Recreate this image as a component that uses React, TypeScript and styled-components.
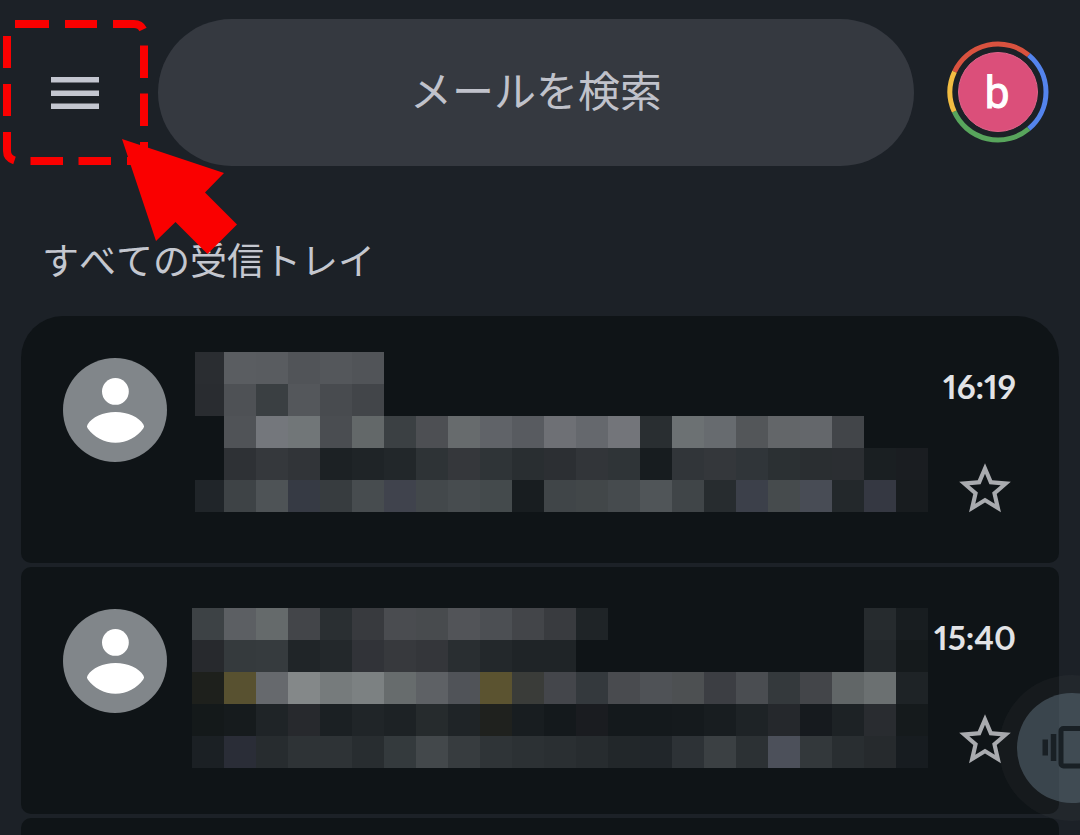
import React from "react";
import styled, { createGlobalStyle } from "styled-components";

const GlobalStyle = createGlobalStyle`
  * { box-sizing: border-box; }
  body { margin: 0; background: #1c2127; }
  button { border: 0; padding: 0; background: none; cursor: pointer; }
  svg { display: block; }
`;

const Screen = styled.div`
  position: relative;
  height: 100vh;
  overflow: hidden;
  background: #1c2127;
  color: #c4c7cf;
  font-family: "Noto Sans CJK JP", sans-serif;
  font-kerning: none;
`;

const Header = styled.header`
  display: flex;
  align-items: center;
  padding: 19px 31px 0 0;
`;

const MenuButton = styled.button`
  display: grid;
  place-items: center;
  width: 150px;
  height: 147px;
  margin-right: 8px;
`;

const SearchField = styled.input`
  flex: 1;
  min-width: 0;
  height: 147px;
  margin-right: 33px;
  padding: 0 40px 8px;
  border: 0;
  border-radius: 74px;
  outline: none;
  background: #353940;
  color: #c4c7cf;
  font-family: inherit;
  font-size: 42px;
  text-align: center;
  &::placeholder { color: #c0c2cb; opacity: 1; }
`;

const AccountButton = styled.button`
  flex: none;
  padding-bottom: 2px;
`;

const AccountLetter = styled.text`
  font-family: Roboto, sans-serif;
  font-size: 44px;
  font-weight: 400;
  fill: #ffffff;
  stroke: #ffffff;
  text-anchor: middle;
`;

const SectionTitle = styled.h1`
  margin: 69px 42px 33px;
  font-size: 37px;
  font-weight: 400;
  line-height: 48px;
`;

const MailList = styled.ul`
  display: flex;
  flex-direction: column;
  gap: 4px;
  margin: 0 21px;
  padding: 0;
  list-style: none;
`;

const MailCard = styled.li<{ $first?: boolean }>`
  display: flex;
  flex: none;
  height: 247px;
  padding: 0 43px 0 42px;
  border-radius: ${(p) => (p.$first ? "42px 42px 10px 10px" : "10px")};
  background: #0f1417;
`;

const SenderPicture = styled.div`
  flex: none;
  margin: 42px 25px 0 0;
`;

const Mosaic = styled.div<{ $top: number; $inset: number }>`
  display: grid;
  grid-template-columns: ${(p) => 32 - p.$inset}px repeat(22, 32px);
  grid-auto-rows: 32px;
  align-content: start;
  flex: none;
  padding: ${(p) => p.$top}px 0 0 ${(p) => p.$inset}px;
`;

const Tile = styled.span<{ $color: string }>`
  background: ${(p) => p.$color};
`;

const MailMeta = styled.div`
  display: flex;
  flex: 1;
  min-width: 0;
  flex-direction: column;
  align-items: flex-end;
  gap: 52px;
  padding-top: 50px;
`;

const Time = styled.time`
  color: #e2e3e6;
  font-family: Lato, sans-serif;
  font-size: 33px;
  font-weight: 700;
  font-kerning: auto;
  font-variant-numeric: proportional-nums;
  line-height: 40px;
  white-space: nowrap;
`;

const StarButton = styled.button`
  color: #a9abaf;
`;

const Callout = styled.svg`
  position: absolute;
  top: 0;
  left: 0;
  pointer-events: none;
`;

const FloatingButton = styled.button`
  position: absolute;
  top: 675px;
  right: -65px;
`;

const firstMail = [
  "2a2d31 5a5d61 595c60 515458 54575b 515458",
  "292c30 4e5155 3a3f42 54575b 484b4f 424549",
  "- 505357 74777c 717678 4a4d51 636869 3b4043 4d4f53 676b6d 606368 585b60 6e7075 65686d 73757a 292e31 6c7173 676b6f 535659 636669 64676b 424549",
  "- 2e3135 35383c 313438 1c2124 1f2427 22272a 2e3336 35373b 2f3437 292e31 2c2f33 323539 2f3437 171c1f 313539 34373b 303539 2b3033 2a2e31 2b2e32 1a1f22 1a1d21",
  "202529 3e4346 4e5356 363a44 373c3f 474c4f 40434d 43484b 474c4f 444a4c 181d20 404548 424749 464b4e 505558 404548 272c2f 3c404a 464b4d 484c55 23282b 353842 181c1f",
];

const secondMail = [
  "3d4245 5c5f63 656a6b 434549 2a2f32 383a3e 4a4c50 484b4e 525458 4c4f53 434549 393b3f 1f2427 - - - - - - - - 262b2e 181d20",
  "27292d 353a3d 363b3e 202528 23282b 313338 37393d 34363a 292e31 23282b 1f2427 1f2427 - - - - - - - - - 23282b 151a1c",
  "1e201c 585130 66696d 848889 767b7c 7c8182 676c6d 5e6165 505358 5b5330 3a3c39 44464b 34393d 494b4f 4f5256 4d5052 3c3e43 4a4d51 34393c 434549 616667 6b7071 1e2326",
  "14191a 161b1d 1f2427 27292d 1b2023 202528 1d2225 262b2d 1f2427 1f211e 181d20 14191c 1a1c20 14191c 14191c 151a1d 181d20 1e2326 25282c 161a1e 1d2225 292c30 151a1c",
  "1b2024 2a2d37 272c2f 2e3336 2e3336 282d30 343a3d 43484b 373c3f 2f3437 2c3134 2a2f32 272c2f 22272a 21262a 2d3236 3b4043 2c3134 4c505a 33383b 292e31 262a2d 171c20",
];

const COLUMNS = 23;

function HiddenText({ rows, top, inset }: { rows: string[]; top: number; inset: number }) {
  const tiles = rows.flatMap((row) => {
    const colors = row.split(" ");
    return Array.from({ length: COLUMNS }, (_, i) =>
      colors[i] && colors[i] !== "-" ? `#${colors[i]}` : "transparent"
    );
  });
  return (
    <Mosaic $top={top} $inset={inset} aria-hidden="true">
      {tiles.map((color, i) => (
        <Tile key={i} $color={color} />
      ))}
    </Mosaic>
  );
}

function PersonIcon() {
  return (
    <svg width="104" height="104" viewBox="0 0 104 104" aria-hidden="true">
      <circle cx="52" cy="52" r="52" fill="#81868a" />
      <circle cx="52.4" cy="33.4" r="13.4" fill="#fff" />
      <path
        d="M24.6 66.6C29 59 40 54 52.5 54s23.500 5 27.900 12.600q1.400 2 0 3.600C74 79 64 84.800 52.500 84.800S31 79 24.600 70.200q-1.400-1.600 0-3.600z"
        fill="#fff"
      />
    </svg>
  );
}

function StarIcon() {
  return (
    <svg width="62" height="62" viewBox="0 0 24 24" fill="currentColor" aria-hidden="true">
      <path d="M22 9.24l-7.19-.62L12 2 9.19 8.63 2 9.24l5.46 4.73L5.82 21 12 17.27 18.18 21l-1.63-7.03L22 9.24zM12 15.4l-3.76 2.27 1-4.28-3.32-2.88 4.38-.38L12 6.1l1.71 4.04 4.38.38-3.32 2.88 1 4.28L12 15.4z" />
    </svg>
  );
}

interface MailProps {
  rows: string[];
  time: string;
  top: number;
  inset?: number;
  first?: boolean;
}

function Mail({ rows, time, top, inset = 0, first }: MailProps) {
  return (
    <MailCard $first={first}>
      <SenderPicture>
        <PersonIcon />
      </SenderPicture>
      <HiddenText rows={rows} top={top} inset={inset} />
      <MailMeta>
        <Time>{time}</Time>
        <StarButton type="button" aria-label="スター">
          <StarIcon />
        </StarButton>
      </MailMeta>
    </MailCard>
  );
}

export default function App() {
  return (
    <Screen>
      <GlobalStyle />
      <Header>
        <MenuButton type="button" aria-label="メニュー">
          <svg width="48" height="32" viewBox="0 0 48 32" fill="#c3c6d0" aria-hidden="true">
            <path d="M0 0h48v5.500H0zM0 13.500h48V19H0zM0 26.500h48V32H0z" />
          </svg>
        </MenuButton>
        <SearchField type="text" placeholder="メールを検索" aria-label="メールを検索" />
        <AccountButton type="button" aria-label="アカウント">
          <svg width="102" height="102" viewBox="-51 -51 102 102">
            <g fill="none" strokeWidth="5">
              <path d="M-43.500-20.300A48 48 0 0 1 30.700-36.900" stroke="#d9523f" />
              <path d="M30.700-36.900A48 48 0 0 1 30.700 36.900" stroke="#5484ed" />
              <path d="M30.700 36.900A48 48 0 0 1-43.800 19.600" stroke="#58a55c" />
              <path d="M-43.800 19.600A48 48 0 0 1-43.500-20.300" stroke="#f2bd42" />
            </g>
            <circle r="39.500" fill="#db4f7a" stroke="#e0648a" />
            <AccountLetter x="-1" y="16">b</AccountLetter>
          </svg>
        </AccountButton>
      </Header>
      <main>
        <SectionTitle>すべての受信トレイ</SectionTitle>
        <MailList>
          <Mail first rows={firstMail} time="16:19" top={36} inset={3} />
          <Mail rows={secondMail} time="15:40" top={41} />
          <MailCard />
        </MailList>
      </main>

      <FloatingButton type="button" aria-label="バイブレーション">
        <svg width="146" height="146" viewBox="0 0 146 146" aria-hidden="true">
          <circle cx="73" cy="73" r="73" fill="#8c8c82" fillOpacity="0.06" />
          <circle cx="73" cy="73" r="55" fill="#5a6a75" fillOpacity="0.55" />
          <g fill="#192025">
            <path d="M43.500 64.500h5.500v16h-5.500zM51.800 59h5.500v27h-5.500zM97 64.500h5.500v16H97zM88.700 59h5.500v27h-5.500z" />
          </g>
          <rect x="62" y="53.500" width="22" height="37.500" rx="2.500" fill="none" stroke="#192025" strokeWidth="5" />
        </svg>
      </FloatingButton>

      <Callout width="240" height="260" viewBox="0 0 240 260" aria-hidden="true">
        <g fill="none" stroke="#fa0000" strokeWidth="8">
          <path d="M15 24H49M65 24H97M113 24H134Q140.500 24 143 29.500" />
          <path d="M144 45.500V78M144 93.500V126M144 142V161" />
          <path d="M30.500 161H63M78.500 161H111M127 161H144" />
          <path d="M7 36V68M7 84V116M7 132V151Q7 158 14.500 160.500" />
        </g>
        <path d="M122 139L224 173L205 192.500L237 224.500L207.500 254L175.500 222L156 241Z" fill="#fa0000" />
      </Callout>
    </Screen>
  );
}
